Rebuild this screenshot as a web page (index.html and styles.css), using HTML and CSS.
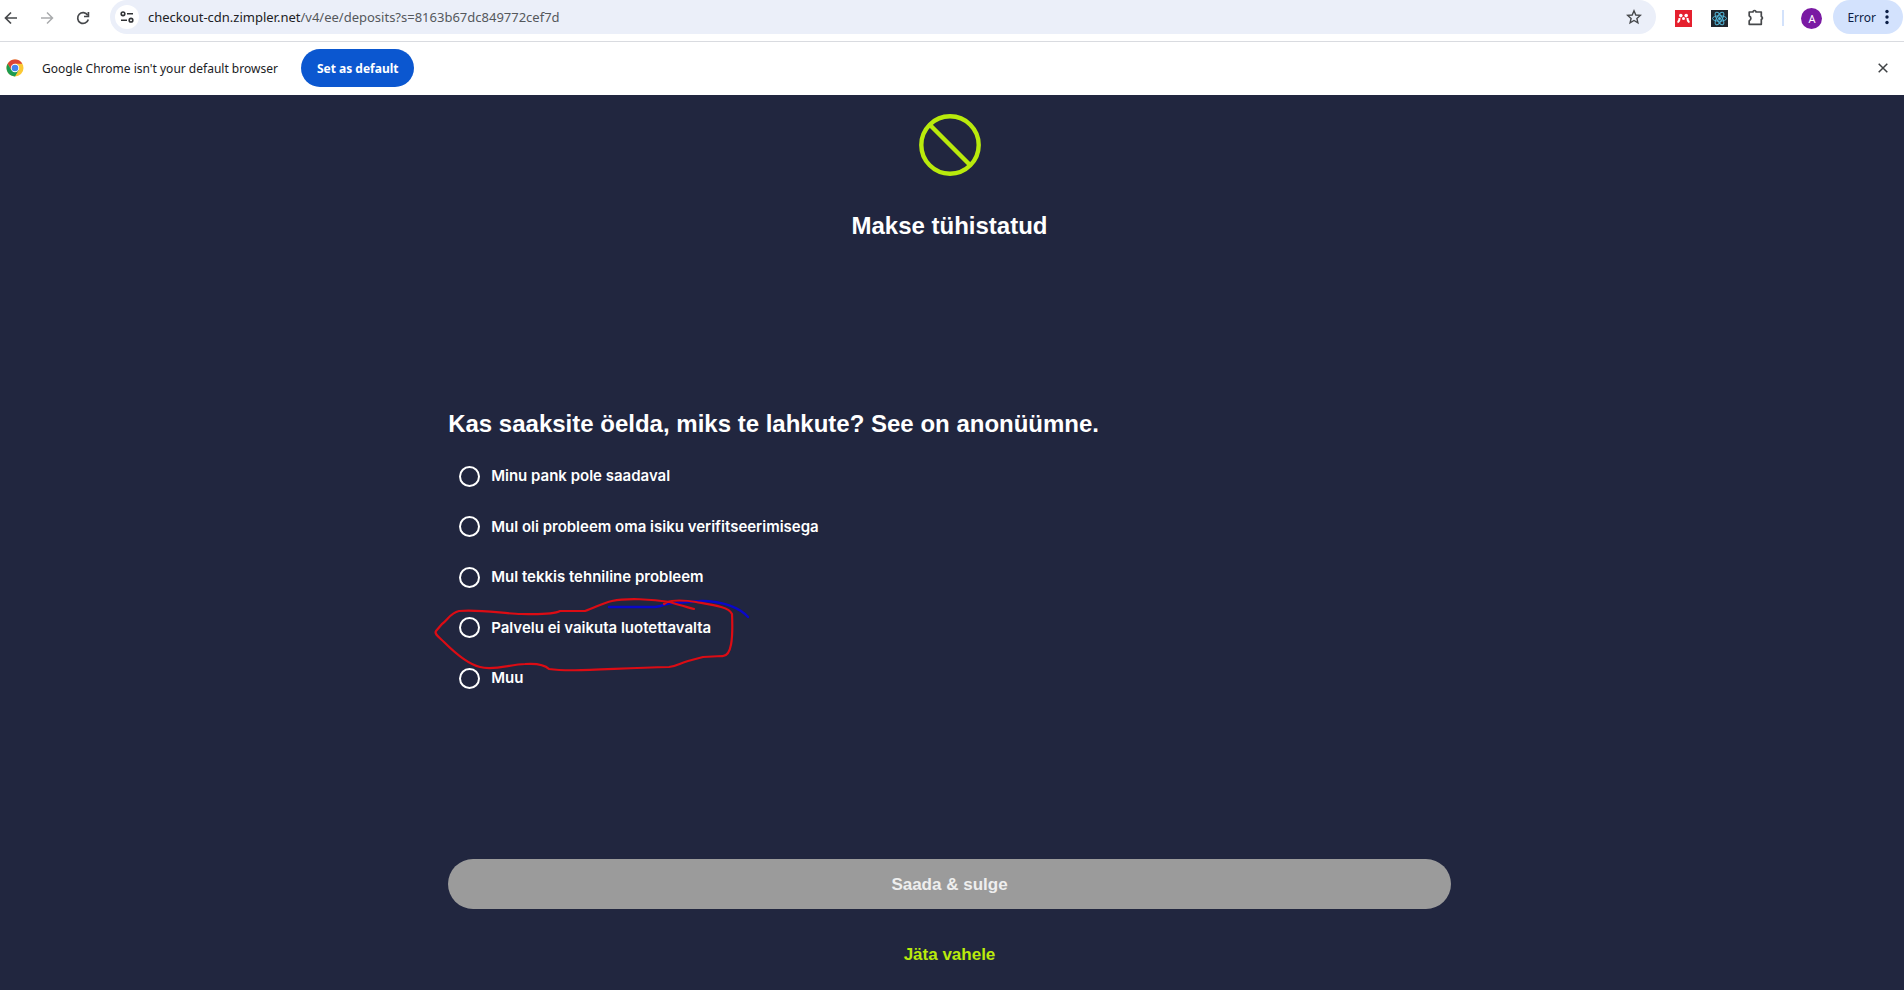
FILE: index.html
```html
<!DOCTYPE html>
<html lang="et">
<head>
<meta charset="utf-8">
<meta name="viewport" content="width=device-width, initial-scale=1">
<title>Makse tühistatud</title>
<link rel="stylesheet" href="styles.css">
</head>
<body>
<header class="toolbar">
  <nav class="nav-buttons" aria-label="Browser navigation">
    <button class="icon-button" type="button" aria-label="Back">
      <svg width="14" height="14" viewBox="0 0 14 14"><path d="M13 7H2M7 1.500L1.500 7L7 12.500" fill="none" stroke="#46484b" stroke-width="1.700"/></svg>
    </button>
    <button class="icon-button" type="button" aria-label="Forward" disabled>
      <svg width="14" height="14" viewBox="0 0 14 14"><path d="M1 7H12M7 1.500L12.500 7L7 12.500" fill="none" stroke="#a9abad" stroke-width="1.500"/></svg>
    </button>
    <button class="icon-button" type="button" aria-label="Reload">
      <svg width="14" height="14" viewBox="0 0 14 14"><path d="M11.700 4.200A5.400 5.400 0 1 0 12.300 8.500" fill="none" stroke="#46484b" stroke-width="1.700"/><path d="M12.400 1V5.500H8" fill="none" stroke="#46484b" stroke-width="1.700"/></svg>
    </button>
  </nav>
  <div class="omnibox">
    <button class="site-info" type="button" aria-label="Site information">
      <svg width="14" height="12" viewBox="0 0 14 12" fill="none" stroke="#303235" stroke-width="1.600"><circle cx="3" cy="2.800" r="1.800"/><path d="M7 2.800H13M1 9.200H7"/><circle cx="11" cy="9.200" r="1.800"/></svg>
    </button>
    <a class="url" href="#"><span class="url-host">checkout-cdn.zimpler.net</span>/v4/ee/deposits?s=8163b67dc849772cef7d</a>
    <button class="icon-button" type="button" aria-label="Bookmark">
      <svg width="16" height="16" viewBox="0 0 16 16"><path d="M8 1.800L9.800 6L14.300 6.400L10.900 9.400L11.900 13.800L8 11.500L4.100 13.800L5.100 9.400L1.700 6.400L6.200 6Z" fill="none" stroke="#46484b" stroke-width="1.400"/></svg>
    </button>
  </div>
  <div class="extensions">
    <button class="icon-button" type="button" aria-label="Mendeley">
      <svg width="17" height="17" viewBox="0 0 17 17"><path d="M0 0H17V17H0Z" fill="#e5202e"/><circle cx="5.800" cy="5.600" r="1.800" fill="#fff"/><circle cx="11.200" cy="5.600" r="1.800" fill="#fff"/><circle cx="8.500" cy="8.500" r="1.500" fill="#fff"/><path d="M2.500 12.200Q4.500 11.700 4.500 8M14.500 12.200Q12.500 11.700 12.500 8" fill="none" stroke="#fff" stroke-width="2"/></svg>
    </button>
    <button class="icon-button" type="button" aria-label="React Developer Tools">
      <svg width="17" height="17" viewBox="0 0 17 17"><path d="M0 0H17V17H0Z" fill="#20262d"/><g fill="none" stroke="#53b9dc" stroke-width="1"><ellipse cx="8.500" cy="8.500" rx="7" ry="2.700"/><ellipse cx="8.500" cy="8.500" rx="7" ry="2.700" transform="rotate(60 8.500 8.500)"/><ellipse cx="8.500" cy="8.500" rx="7" ry="2.700" transform="rotate(120 8.500 8.500)"/></g><circle cx="8.500" cy="8.500" r="1.500" fill="#53b9dc"/></svg>
    </button>
    <button class="icon-button" type="button" aria-label="Extensions">
      <svg width="18" height="18" viewBox="0 0 18 18"><path d="M2.200 3H6V2.500Q7.500 0.500 9 2.500V3H14.300V7.500Q16.600 9 14.300 10.500V15.300H2.200V11.900Q5.600 9.300 2.200 6.700Z" fill="none" stroke="#46484b" stroke-width="1.700" stroke-linejoin="round"/></svg>
    </button>
    <span class="divider"></span>
    <button class="avatar" type="button" aria-label="Profile">A</button>
  </div>
  <button class="error-button" type="button">Error
    <svg width="4" height="16" viewBox="0 0 4 16" fill="#0b1d45"><circle cx="2" cy="2.500" r="1.700"/><circle cx="2" cy="8" r="1.700"/><circle cx="2" cy="13.500" r="1.700"/></svg>
  </button>
</header>

<section class="infobar">
  <svg width="18" height="18" viewBox="0 0 18 18">
    <circle cx="9" cy="9" r="8.500" fill="#fbc934"/>
    <path d="M1.600 4.800A8.500 8.500 0 0 1 16.400 4.800H9L5.400 11.100Z" fill="#dc4437"/>
    <path d="M1.600 4.800A8.500 8.500 0 0 0 9 17.500L12.700 11.100H5.400Z" fill="#1c9b51"/>
    <circle cx="9" cy="9" r="4.200" fill="#fff"/><circle cx="9" cy="9" r="3.300" fill="#4484f0"/>
  </svg>
  <span class="infobar-text">Google Chrome isn't your default browser</span>
  <button class="default-button" type="button">Set as default</button>
  <button class="icon-button close-button" type="button" aria-label="Close">
    <svg width="10" height="10" viewBox="0 0 10 10"><path d="M0.700 0.700L9.300 9.300M9.300 0.700L0.700 9.300" stroke="#3f4245" stroke-width="1.500"/></svg>
  </button>
</section>

<main class="checkout">
  <div class="status">
    <svg width="62" height="62" viewBox="0 0 62 62" fill="none" stroke="#b9ea0c" stroke-width="4.400"><circle cx="31" cy="31" r="28.700"/><path d="M11 11L51 51"/></svg>
    <h1 class="title">Makse tühistatud</h1>
  </div>
  <form class="survey">
    <fieldset class="question">
      <legend class="title">Kas saaksite öelda, miks te lahkute? See on anonüümne.</legend>
      <div class="options">
        <label class="option"><input class="radio" type="radio" name="reason">Minu pank pole saadaval</label>
        <label class="option"><input class="radio" type="radio" name="reason">Mul oli probleem oma isiku verifitseerimisega</label>
        <label class="option"><input class="radio" type="radio" name="reason">Mul tekkis tehniline probleem</label>
        <label class="option"><input class="radio" type="radio" name="reason">Palvelu ei vaikuta luotettavalta
          <svg class="marker" width="340" height="90" viewBox="425 590 340 90" fill="none" stroke-linecap="round" stroke-linejoin="round">
            <path d="M609 607H655C665 606 664 603 675 603L702 601C723 601 740 608 748 617" stroke="#0a08c8" stroke-width="2.400"/>
            <path d="M694 609C687 607 679 605 670 602C652 599 626 598 612 601C602 603 595 608 585 611L560 611C553 615 535 614 521 614C505 614 480 609 459 611C450 613 448 620 442 624L436 631C434 634 439 637 444 642C454 652 467 664 480 667C494 671 511 664 525 664C539 663 545 665 549 669C570 672 600 669 669 667C677 666 680 663 688 661L703 657L722 656C732 657 733 637 732 614C729 607 713 605 696 602C685 600 672 600 667 602L664 604" stroke="#dc0c14" stroke-width="2.200"/>
          </svg>
        </label>
        <label class="option"><input class="radio" type="radio" name="reason">Muu</label>
      </div>
    </fieldset>
    <div class="actions">
      <button class="submit" type="submit" disabled>Saada &amp; sulge</button>
      <button class="skip" type="button">Jäta vahele</button>
    </div>
  </form>
</main>
</body>
</html>
```
FILE: styles.css
```css
* {
  box-sizing: border-box;
}

body {
  display: flex;
  flex-direction: column;
  min-height: 100vh;
  margin: 0;
  background: #fff;
  font-family: "Noto Sans", "Open Sans", sans-serif;
  font-size: 12px;
  color: #202124;
}

button {
  padding: 0;
  border: 0;
  background: none;
  font: inherit;
  color: inherit;
}

svg {
  display: block;
  flex: none;
}

.toolbar {
  display: flex;
  align-items: flex-start;
  height: 42px;
  border-bottom: 1px solid #d9dbe0;
}

.nav-buttons,
.extensions {
  display: flex;
  align-items: center;
  height: 36px;
}

.nav-buttons {
  gap: 22px;
  padding: 0 20px 0 4px;
}

.icon-button {
  display: flex;
  align-items: center;
  justify-content: center;
}

.omnibox {
  display: flex;
  flex: 1;
  align-items: center;
  height: 34px;
  padding: 0 14px 0 5px;
  border-radius: 17px;
  background: #ebeff9;
}

.site-info {
  display: grid;
  place-items: center;
  width: 24px;
  height: 24px;
  border-radius: 12px;
  background: #fff;
}

.url {
  flex: 1;
  padding-left: 9px;
  font-size: 13px;
  color: #55585c;
  text-decoration: none;
}

.url-host {
  color: #202124;
}

.extensions {
  gap: 19px;
  padding: 0 11px 0 19px;
}

.divider {
  width: 2px;
  height: 16px;
  margin: 0 -2px;
  background: #d3e2fb;
}

.avatar {
  width: 21px;
  height: 21px;
  border-radius: 50%;
  background: #7a1aa3;
  font-size: 11px;
  color: #fff;
}

.error-button {
  display: flex;
  align-items: center;
  gap: 9px;
  height: 34px;
  margin-right: 1px;
  padding: 0 14px;
  border-radius: 17px;
  background: #d3e2fd;
  color: #0b1d45;
}

.infobar {
  display: flex;
  align-items: center;
  height: 53px;
  padding: 0 16px 1px 6px;
}

.infobar-text {
  padding: 0 23px 0 18px;
}

.default-button {
  height: 38px;
  padding: 0 16px;
  border-radius: 19px;
  background: #0b57d0;
  font-weight: 700;
  color: #fff;
}

.close-button {
  margin-left: auto;
}

.checkout {
  display: flex;
  flex: 1;
  flex-direction: column;
  align-items: center;
  padding: 19px 5px 23px 0;
  background: #21263f;
  font-family: "Liberation Sans", Arial, sans-serif;
  color: #fff;
}

.status {
  display: flex;
  flex-direction: column;
  align-items: center;
  gap: 34px;
}

.title {
  margin: 0;
  padding: 0;
  font-size: 24px;
  font-weight: 700;
  line-height: 32px;
}

.survey {
  display: flex;
  flex: 1;
  flex-direction: column;
  justify-content: space-between;
  width: 52.8%;
  padding-top: 166px;
}

.question {
  margin: 0;
  padding: 0;
  border: 0;
}

.options {
  display: flex;
  flex-direction: column;
  justify-content: space-between;
  align-items: flex-start;
  min-height: 226px;
  margin: 24px 0 0 11px;
}

.option {
  display: flex;
  position: relative;
  align-items: center;
  gap: 11px;
  font-family: Inter, "Liberation Sans", sans-serif;
  font-size: 15px;
  font-weight: 600;
  line-height: 24px;
}

.radio {
  width: 21px;
  height: 21px;
  margin: 0;
  border: 2px solid #fff;
  border-radius: 50%;
  appearance: none;
}

.radio:checked {
  box-shadow: inset 0 0 0 4px #21263f;
  background: #b9ea0c;
}

.marker {
  position: absolute;
  top: -26px;
  left: -34px;
  pointer-events: none;
}

.actions {
  display: flex;
  flex-direction: column;
  gap: 34px;
}

.submit {
  height: 50px;
  padding-top: 2px;
  border-radius: 25px;
  background: #9b9b9b;
  font-size: 17px;
  font-weight: 700;
  color: #eee;
}

.skip {
  align-self: center;
  font-size: 17px;
  font-weight: 700;
  line-height: 24px;
  color: #b9ea0c;
}
```
